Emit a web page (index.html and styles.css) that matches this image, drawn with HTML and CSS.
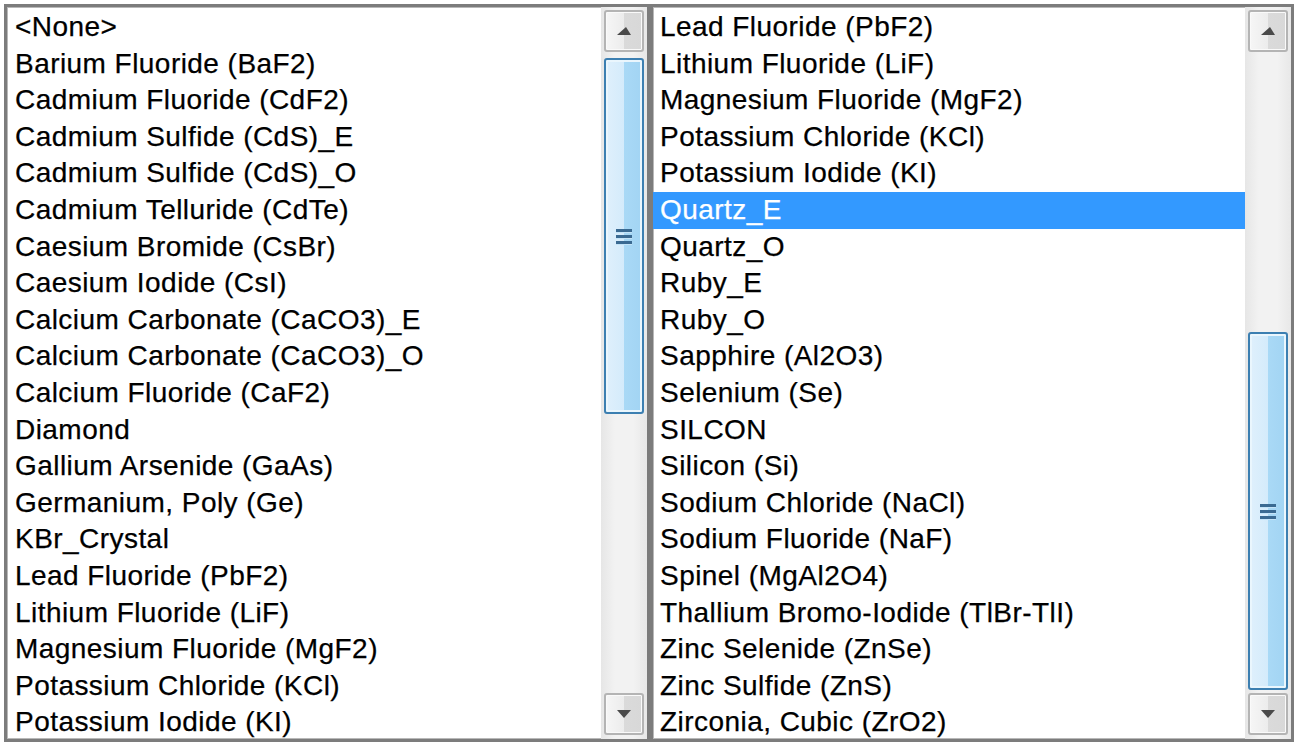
FILE: index.html
```html
<!DOCTYPE html>
<html>
<head>
<meta charset="utf-8">
<link rel="stylesheet" href="styles.css">
</head>
<body>
<div class="wrap">
  <div class="listbox left">
    <ul class="items">
      <li>&lt;None&gt;</li>
      <li>Barium Fluoride (BaF2)</li>
      <li>Cadmium Fluoride (CdF2)</li>
      <li>Cadmium Sulfide (CdS)_E</li>
      <li>Cadmium Sulfide (CdS)_O</li>
      <li>Cadmium Telluride (CdTe)</li>
      <li>Caesium Bromide (CsBr)</li>
      <li>Caesium Iodide (CsI)</li>
      <li>Calcium Carbonate (CaCO3)_E</li>
      <li>Calcium Carbonate (CaCO3)_O</li>
      <li>Calcium Fluoride (CaF2)</li>
      <li>Diamond</li>
      <li>Gallium Arsenide (GaAs)</li>
      <li>Germanium, Poly (Ge)</li>
      <li>KBr_Crystal</li>
      <li>Lead Fluoride (PbF2)</li>
      <li>Lithium Fluoride (LiF)</li>
      <li>Magnesium Fluoride (MgF2)</li>
      <li>Potassium Chloride (KCl)</li>
      <li>Potassium Iodide (KI)</li>
    </ul>
    <div class="scrollbar">
      <div class="btn"><svg width="14" height="8" viewBox="0 0 14 8"><path d="M0 8 L9 0 L14 8 Z" fill="#4a4a4a"/></svg></div>
      <div class="track top-thumb">
        <div class="thumb"><span class="grip"><i></i><i></i><i></i></span></div>
      </div>
      <div class="btn"><svg width="14" height="8" viewBox="0 0 14 8"><path d="M0 0 L14 0 L7 8 Z" fill="#4a4a4a"/></svg></div>
    </div>
  </div>
  <div class="listbox right">
    <ul class="items">
      <li>Lead Fluoride (PbF2)</li>
      <li>Lithium Fluoride (LiF)</li>
      <li>Magnesium Fluoride (MgF2)</li>
      <li>Potassium Chloride (KCl)</li>
      <li>Potassium Iodide (KI)</li>
      <li class="sel">Quartz_E</li>
      <li>Quartz_O</li>
      <li>Ruby_E</li>
      <li>Ruby_O</li>
      <li>Sapphire (Al2O3)</li>
      <li>Selenium (Se)</li>
      <li>SILCON</li>
      <li>Silicon (Si)</li>
      <li>Sodium Chloride (NaCl)</li>
      <li>Sodium Fluoride (NaF)</li>
      <li>Spinel (MgAl2O4)</li>
      <li>Thallium Bromo-Iodide (TlBr-TlI)</li>
      <li>Zinc Selenide (ZnSe)</li>
      <li>Zinc Sulfide (ZnS)</li>
      <li>Zirconia, Cubic (ZrO2)</li>
    </ul>
    <div class="scrollbar">
      <div class="btn"><svg width="14" height="8" viewBox="0 0 14 8"><path d="M0 8 L9 0 L14 8 Z" fill="#4a4a4a"/></svg></div>
      <div class="track bottom-thumb">
        <div class="thumb"><span class="grip"><i></i><i></i><i></i></span></div>
      </div>
      <div class="btn"><svg width="14" height="8" viewBox="0 0 14 8"><path d="M0 0 L14 0 L7 8 Z" fill="#4a4a4a"/></svg></div>
    </div>
  </div>
</div>
</body>
</html>
```

FILE: styles.css
```css
html, body {
  margin: 0;
  padding: 0;
  background: #ffffff;
}
.wrap {
  display: flex;
  padding: 4px 3px 2px 4px;
  height: 744px;
  box-sizing: border-box;
}
.listbox {
  display: flex;
  height: 738px;
  box-sizing: border-box;
  border: 3px solid #7c7c7c;
  box-shadow: inset 0 0 0 1px #b8b8b8;
  background: #ffffff;
}
.listbox.left { width: 646px; }
.listbox.right { width: 644px; }
.items {
  list-style: none;
  margin: 0;
  padding: 2px 0 0 0;
  flex: 1;
  overflow: hidden;
  font-family: "Liberation Sans", Arial, sans-serif;
  font-size: 28px;
  letter-spacing: 0.45px;
  -webkit-text-stroke: 0.25px #000;
  color: #000;
}
.left .items { padding-left: 1px; }
.items li {
  height: 36.6px;
  line-height: 36.6px;
  padding-left: 7px;
  white-space: nowrap;
}
.items li.sel {
  background: #3399ff;
  color: #ffffff;
  -webkit-text-stroke: 0.25px #ffffff;
}
.scrollbar {
  width: 46px;
  display: flex;
  flex-direction: column;
  padding: 3px 3px 4px 3px;
  box-sizing: border-box;
  background: linear-gradient(to right, #e6e6e6, #f2f2f2 30%, #f2f2f2 70%, #e8e8e8);
}
.btn {
  height: 42px;
  box-sizing: border-box;
  border: 2px solid #b4b4b4;
  border-radius: 3px;
  background: linear-gradient(to right, #f6f6f6, #ececec 50%, #dadada 51%, #d8d8d8);
  display: flex;
  align-items: center;
  justify-content: center;
  box-shadow: inset 0 0 0 1px #fafafa;
}
.track {
  flex: 1;
  display: flex;
  flex-direction: column;
}
.thumb {
  box-sizing: border-box;
  border: 2px solid #3c7fb1;
  border-radius: 3px;
  background: linear-gradient(to right, #dff0fc, #d4ebfb 50%, #a9d9f6 51%, #a2d4f3);
  box-shadow: inset 0 0 0 2px #eaf6fd;
  display: flex;
  align-items: center;
  justify-content: center;
}
.top-thumb .thumb {
  margin-top: 6px;
  height: 356px;
}
.bottom-thumb .thumb {
  margin-top: 280px;
  height: 358px;
}
.grip {
  display: flex;
  flex-direction: column;
  gap: 3px;
}
.grip i {
  display: block;
  width: 16px;
  height: 3px;
  background: #3a6a92;
  box-shadow: 0 1px 0 #c4e4f8;
}
```
